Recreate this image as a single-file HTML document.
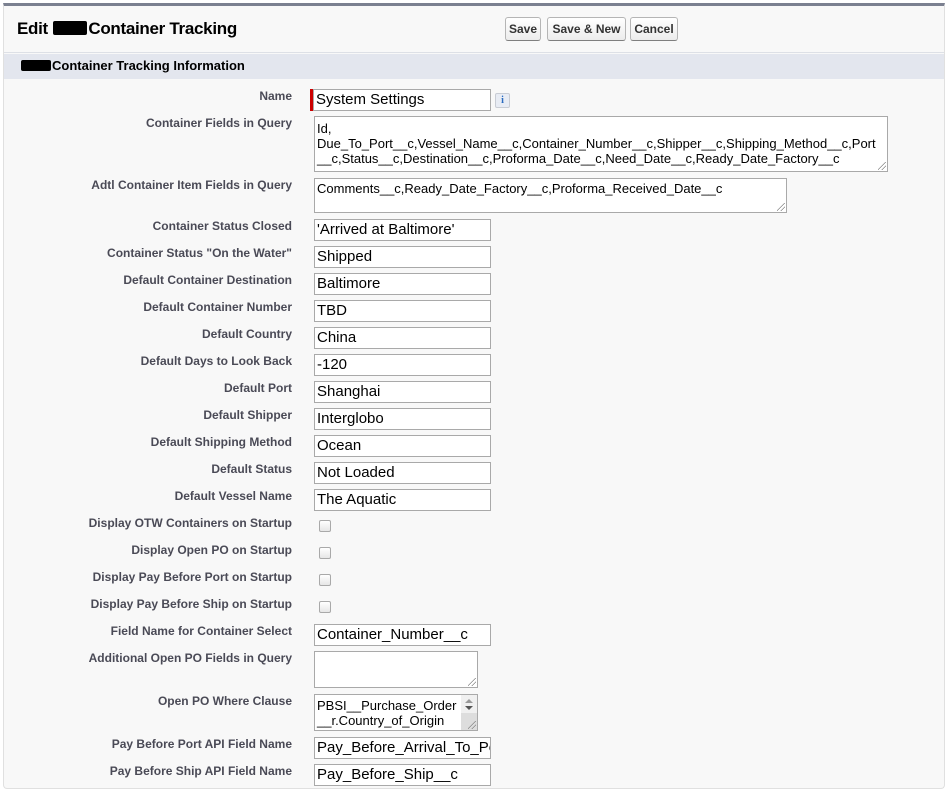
<!DOCTYPE html>
<html><head><meta charset="utf-8"><style>
*{box-sizing:border-box;margin:0;padding:0}
body{width:946px;height:807px;background:#fff;font-family:"Liberation Sans",Arial,sans-serif;position:relative;overflow:hidden}
.panel{position:absolute;left:3px;top:3px;width:942px;height:786px;background:#f8f8f8;border:1px solid #e0e0e0;border-top:3px solid #7b8090;border-radius:0 0 4px 4px}
.title{position:absolute;left:17px;top:19px;font-size:17px;font-weight:bold;color:#000;letter-spacing:-0.3px}
.red{display:inline-block;width:34px;height:14px;background:#000;vertical-align:-1px;margin:0 1px;border-radius:2px}
.hr{position:absolute;left:4px;top:52px;width:940px;height:1px;background:#dde0e6}
.btn{position:absolute;top:17px;height:24px;border:1px solid #b5b5b5;border-bottom-color:#7f7f7f;border-radius:3px;background:linear-gradient(#fff,#ececec);font-size:12px;font-weight:bold;color:#333;text-align:center;line-height:22px}
.sec{position:absolute;left:4px;top:54px;width:940px;height:25px;background:#e3e6ee;font-size:13px;font-weight:bold;color:#000;padding:4px 0 0 16px}
.sec .red{width:30px;height:11px}
.lbl{position:absolute;right:654px;font-size:12px;font-weight:bold;color:#4a4a56;text-align:right;white-space:nowrap}
.in{position:absolute;left:314px;width:177px;height:22px;border:1px solid #a9a9a9;background:#fff;font-size:15px;color:#000;padding:1px 2px;white-space:nowrap;overflow:hidden;line-height:18px}
.ta{position:absolute;left:314px;border:1px solid #a9a9a9;background:#fff;font-size:13px;line-height:15px;padding:2px 2px;color:#000;overflow:hidden;word-break:break-all}
.cb{position:absolute;left:319px;width:12px;height:12px;border:1px solid #a9a9a9;border-radius:2px;background:linear-gradient(#fff,#e6e6e6)}
.grip{position:absolute;right:1px;bottom:1px;width:8px;height:8px;background:linear-gradient(135deg,transparent 45%,#888 46%,#888 52%,transparent 53%,transparent 70%,#888 71%,#888 77%,transparent 78%)}
</style></head><body>
<div class="panel"></div>
<div class="title">Edit <span class="red"></span>Container Tracking</div>
<div class="btn" style="left:505px;width:36px">Save</div>
<div class="btn" style="left:547px;width:79px">Save &amp; New</div>
<div class="btn" style="left:630px;width:48px">Cancel</div>
<div class="hr"></div>
<div class="sec"><span class="red"></span>Container Tracking Information</div>

<div class="lbl" style="top:89px">Name</div>
<div style="position:absolute;left:310px;top:89px;width:3px;height:22px;background:#c00"></div>
<div class="in" style="top:89px;left:313px;width:178px">System Settings</div>
<div style="position:absolute;left:495px;top:93px;width:15px;height:15px;border:1px solid #c8ccd4;border-radius:2px;background:#e8ecf4;color:#2a6bc0;font:bold 10px 'Liberation Serif',serif;text-align:center;line-height:13px">i</div>

<div class="lbl" style="top:116px">Container Fields in Query</div>
<div class="ta" style="top:116px;width:574px;height:56px;padding-top:4px">Id,<br>Due_To_Port__c,Vessel_Name__c,Container_Number__c,Shipper__c,Shipping_Method__c,Port<br>__c,Status__c,Destination__c,Proforma_Date__c,Need_Date__c,Ready_Date_Factory__c<div class="grip"></div></div>

<div class="lbl" style="top:178px">Adtl Container Item Fields in Query</div>
<div class="ta" style="top:178px;width:473px;height:35px">Comments__c,Ready_Date_Factory__c,Proforma_Received_Date__c<div class="grip"></div></div>

<div class="lbl" style="top:219px">Container Status Closed</div><div class="in" style="top:219px">'Arrived at Baltimore'</div>
<div class="lbl" style="top:246px">Container Status "On the Water"</div><div class="in" style="top:246px">Shipped</div>
<div class="lbl" style="top:273px">Default Container Destination</div><div class="in" style="top:273px">Baltimore</div>
<div class="lbl" style="top:300px">Default Container Number</div><div class="in" style="top:300px">TBD</div>
<div class="lbl" style="top:327px">Default Country</div><div class="in" style="top:327px">China</div>
<div class="lbl" style="top:354px">Default Days to Look Back</div><div class="in" style="top:354px">-120</div>
<div class="lbl" style="top:381px">Default Port</div><div class="in" style="top:381px">Shanghai</div>
<div class="lbl" style="top:408px">Default Shipper</div><div class="in" style="top:408px">Interglobo</div>
<div class="lbl" style="top:435px">Default Shipping Method</div><div class="in" style="top:435px">Ocean</div>
<div class="lbl" style="top:462px">Default Status</div><div class="in" style="top:462px">Not Loaded</div>
<div class="lbl" style="top:489px">Default Vessel Name</div><div class="in" style="top:489px">The Aquatic</div>

<div class="lbl" style="top:516px">Display OTW Containers on Startup</div><div class="cb" style="top:520px"></div>
<div class="lbl" style="top:543px">Display Open PO on Startup</div><div class="cb" style="top:547px"></div>
<div class="lbl" style="top:570px">Display Pay Before Port on Startup</div><div class="cb" style="top:574px"></div>
<div class="lbl" style="top:597px">Display Pay Before Ship on Startup</div><div class="cb" style="top:601px"></div>

<div class="lbl" style="top:624px">Field Name for Container Select</div><div class="in" style="top:624px">Container_Number__c</div>
<div class="lbl" style="top:651px">Additional Open PO Fields in Query</div>
<div class="ta" style="top:651px;width:164px;height:37px"><div class="grip"></div></div>
<div class="lbl" style="top:694px">Open PO Where Clause</div>
<div class="ta" style="top:694px;width:164px;height:37px;font-size:13px;padding-right:18px;padding-top:3px">PBSI__Purchase_Order__r.Country_of_Origin<div style="position:absolute;right:0;top:0;width:16px;height:35px;background:#f0f0f0"><div style="position:absolute;left:4px;top:4px;border:4px solid transparent;border-bottom:4px solid #999;border-top:0"></div><div style="position:absolute;left:4px;top:11px;border:4px solid transparent;border-top:4px solid #555;border-bottom:0"></div><div style="position:absolute;left:0;top:18px;width:16px;height:17px;background:#ddd"></div></div><div class="grip"></div></div>
<div class="lbl" style="top:737px">Pay Before Port API Field Name</div><div class="in" style="top:737px">Pay_Before_Arrival_To_Port__c</div>
<div class="lbl" style="top:764px">Pay Before Ship API Field Name</div><div class="in" style="top:764px">Pay_Before_Ship__c</div>
</body></html>
